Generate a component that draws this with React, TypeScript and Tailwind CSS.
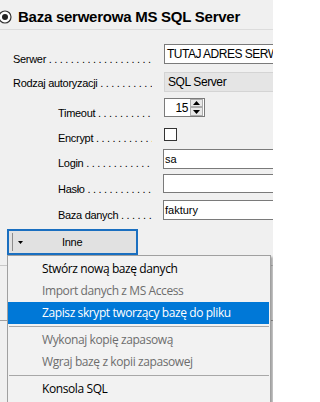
import React from "react";

const DOTS = " . . . . . . . . . . . . . . . . . . . . . . . . . . . . . . . . .";

function Label({ text, indent }: { text: string; indent: number }) {
  return (
    <div
      className={
        "w-[152px] shrink-0 overflow-hidden whitespace-nowrap font-['Liberation_Sans',Arial,sans-serif] text-[11px] leading-[14px] tracking-[-0.3px] text-black " +
        (indent === 13 ? "pl-[13px]" : "pl-[58px]")
      }
    >
      {text}
      {DOTS}
    </div>
  );
}

function MenuItem({
  text,
  disabled,
  active,
}: {
  text: string;
  disabled?: boolean;
  active?: boolean;
}) {
  return (
    <div
      className={
        "h-[22px] flex items-center pl-[34px] mr-[1px] whitespace-nowrap font-['Open_Sans','Noto_Sans',sans-serif] text-[12px] tracking-[-0.4px] " +
        (active
          ? "bg-[#0078d7] text-white"
          : disabled
          ? "text-[#6d6d6d]"
          : "text-black")
      }
    >
      {text}
    </div>
  );
}

function Sep() {
  return (
    <div className="h-[5px] pt-[2px] mx-[1px]">
      <div className="h-px bg-[#a8a8a8]" />
    </div>
  );
}

export default function App() {
  return (
    <div className="relative w-[273px] h-[402px] overflow-hidden bg-[#f0f0f0] font-['Liberation_Sans',Arial,sans-serif]">
      {/* header */}
      <div className="h-[29px] flex items-start">
        <svg className="ml-[-2px] mt-[10px] shrink-0" width="14" height="14" viewBox="0 0 14 14">
          <circle cx="7" cy="7" r="6" fill="#fff" stroke="#333" strokeWidth="1.2" />
          <circle cx="7" cy="7" r="3" fill="#222" />
        </svg>
        <div className="ml-[6px] mt-[8px] shrink-0 text-[15px] leading-[17px] font-bold tracking-[-0.25px] text-black whitespace-nowrap">
          Baza serwerowa MS SQL Server
        </div>
      </div>
      <div className="h-px bg-[#dcdcdc]" />
      <div className="h-[14px]" />

      {/* Serwer */}
      <div className="flex h-[28px] items-start">
        <div className="mt-[8px] shrink-0">
          <Label text="Serwer" indent={13} />
        </div>
        <div className="ml-[12px] shrink-0 w-[200px] h-[20px] border border-[#7a7a7a] bg-white flex items-center pl-[2px] text-[12px] tracking-[-0.5px] text-black whitespace-nowrap overflow-hidden">
          TUTAJ ADRES SERWERA
        </div>
      </div>

      {/* Rodzaj */}
      <div className="flex h-[26px] items-start">
        <div className="mt-[4px] shrink-0">
          <Label text="Rodzaj autoryzacji" indent={13} />
        </div>
        <div className="ml-[12px] shrink-0 w-[200px] h-[20px] border border-[#d4d4d4] bg-[#e5e5e5] flex items-center pl-[3px] text-[12px] tracking-[-0.4px] text-black whitespace-nowrap">
          SQL Server
        </div>
      </div>

      {/* Timeout */}
      <div className="flex h-[30px] items-start">
        <div className="mt-[8px] shrink-0">
          <Label text="Timeout" indent={58} />
        </div>
        <div className="ml-[12px] shrink-0 w-[41px] h-[19px] border border-[#7a7a7a] bg-white flex items-center">
          <div className="flex-1 text-right pr-[2px] text-[12px] tracking-[-0.4px] text-black">15</div>
          <div className="w-[13px] h-[17px] flex flex-col mr-px">
            <div className="h-[8px] border border-[#adadad] bg-[#e8e8e8] flex items-center justify-center">
              <svg width="7" height="4" viewBox="0 0 7 4">
                <path d="M3.5 0 L7 4 L0 4 Z" fill="#000" />
              </svg>
            </div>
            <div className="h-[9px] border border-[#adadad] bg-[#e8e8e8] flex items-center justify-center">
              <svg width="7" height="4" viewBox="0 0 7 4">
                <path d="M0 0 L7 0 L3.5 4 Z" fill="#000" />
              </svg>
            </div>
          </div>
        </div>
      </div>

      {/* Encrypt */}
      <div className="flex h-[21px] items-start">
        <div className="mt-[3px] shrink-0">
          <Label text="Encrypt" indent={58} />
        </div>
        <div className="ml-[12px] shrink-0 w-[13px] h-[13px] border border-[#333] bg-white" />
      </div>

      {/* Login */}
      <div className="flex h-[25px] items-start">
        <div className="mt-[7px] shrink-0">
          <Label text="Login" indent={58} />
        </div>
        <div className="ml-[11px] shrink-0 w-[200px] h-[20px] border border-[#7a7a7a] bg-white flex items-center pl-[1px] text-[11px] text-black">
          sa
        </div>
      </div>

      {/* Hasło */}
      <div className="flex h-[26px] items-start">
        <div className="mt-[8px] shrink-0">
          <Label text="Hasło" indent={58} />
        </div>
        <div className="ml-[11px] shrink-0 w-[200px] h-[19px] border border-[#7a7a7a] bg-white" />
      </div>

      {/* Baza danych */}
      <div className="flex h-[29px] items-start">
        <div className="mt-[8px] shrink-0">
          <Label text="Baza danych" indent={58} />
        </div>
        <div className="ml-[11px] shrink-0 w-[200px] h-[20px] border border-[#7a7a7a] bg-white flex items-center pl-[1px] text-[11px] text-black">
          faktury
        </div>
      </div>

      {/* Inne button */}
      <div className="ml-[7px] w-[131px] h-[26px] border-2 border-[#1a6fc0] bg-[#e1e1e1] flex items-center">
        <div className="ml-[3px] w-px h-[18px] bg-[#8c8c8c]" />
        <svg className="ml-[5px]" width="5" height="3" viewBox="0 0 5 3">
          <path d="M0 0 L5 0 L2.5 3 Z" fill="#000" />
        </svg>
        <div className="ml-[39px] text-[11px] tracking-[-0.3px] text-black">Inne</div>
      </div>

      {/* background lines under the menu */}
      <div className="h-[10px]" />
      <div className="h-px bg-[#c8c8c8]" />
      <div className="h-[54px]" />
      <div className="h-px bg-[#a0a0a0]" />

      {/* dropdown menu */}
      <div className="absolute left-[7px] top-[255px] w-[264px] h-[160px] border border-[#a0a0a0] bg-[#f2f2f2] shadow-[2px_2px_2px_rgba(0,0,0,0.3)] pt-[2px]">
        <MenuItem text="Stwórz nową bazę danych" />
        <MenuItem text="Import danych z MS Access" disabled />
        <MenuItem text="Zapisz skrypt tworzący bazę do pliku" active />
        <Sep />
        <MenuItem text="Wykonaj kopię zapasową" disabled />
        <MenuItem text="Wgraj bazę z kopii zapasowej" disabled />
        <Sep />
        <MenuItem text="Konsola SQL" />
      </div>
    </div>
  );
}
